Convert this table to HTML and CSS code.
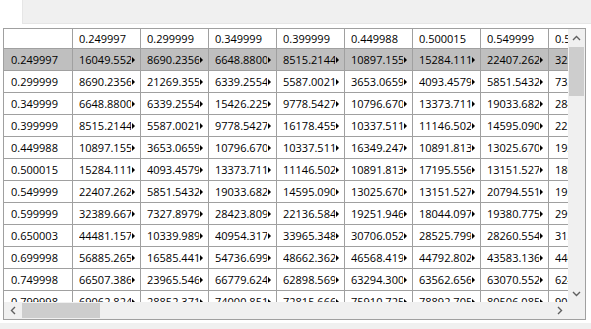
FILE: index.html
```html
<!DOCTYPE html>
<html>
<head>
<meta charset="utf-8">
<link rel="stylesheet" href="styles.css">
</head>
<body>
<div class="toolbar"></div>
<div class="frame">
  <div class="viewport">
    <div class="grid">
      <div class="row head"><div class="c rh"></div><div class="c">0.249997</div><div class="c">0.299999</div><div class="c">0.349999</div><div class="c">0.399999</div><div class="c">0.449988</div><div class="c">0.500015</div><div class="c">0.549999</div><div class="c">0.599999</div></div>
      <div class="row sel"><div class="c rh">0.249997</div><div class="c e"><span>16049.5523</span></div><div class="c e"><span>8690.23561</span></div><div class="c e"><span>6648.88003</span></div><div class="c e"><span>8515.21442</span></div><div class="c e"><span>10897.1552</span></div><div class="c e"><span>15284.1117</span></div><div class="c e"><span>22407.2621</span></div><div class="c e"><span>32389.6671</span></div></div>
      <div class="row"><div class="c rh">0.299999</div><div class="c e"><span>8690.23561</span></div><div class="c e"><span>21269.3552</span></div><div class="c e"><span>6339.25541</span></div><div class="c e"><span>5587.00214</span></div><div class="c e"><span>3653.06591</span></div><div class="c e"><span>4093.45791</span></div><div class="c e"><span>5851.54321</span></div><div class="c e"><span>7327.89791</span></div></div>
      <div class="row"><div class="c rh">0.349999</div><div class="c e"><span>6648.88003</span></div><div class="c e"><span>6339.25541</span></div><div class="c e"><span>15426.2251</span></div><div class="c e"><span>9778.54271</span></div><div class="c e"><span>10796.6701</span></div><div class="c e"><span>13373.7113</span></div><div class="c e"><span>19033.6821</span></div><div class="c e"><span>28423.8091</span></div></div>
      <div class="row"><div class="c rh">0.399999</div><div class="c e"><span>8515.21442</span></div><div class="c e"><span>5587.00214</span></div><div class="c e"><span>9778.54271</span></div><div class="c e"><span>16178.4551</span></div><div class="c e"><span>10337.5112</span></div><div class="c e"><span>11146.5021</span></div><div class="c e"><span>14595.0901</span></div><div class="c e"><span>22136.5841</span></div></div>
      <div class="row"><div class="c rh">0.449988</div><div class="c e"><span>10897.1552</span></div><div class="c e"><span>3653.06591</span></div><div class="c e"><span>10796.6701</span></div><div class="c e"><span>10337.5112</span></div><div class="c e"><span>16349.2471</span></div><div class="c e"><span>10891.8131</span></div><div class="c e"><span>13025.6701</span></div><div class="c e"><span>19251.9461</span></div></div>
      <div class="row"><div class="c rh">0.500015</div><div class="c e"><span>15284.1117</span></div><div class="c e"><span>4093.45791</span></div><div class="c e"><span>13373.7113</span></div><div class="c e"><span>11146.5021</span></div><div class="c e"><span>10891.8131</span></div><div class="c e"><span>17195.5561</span></div><div class="c e"><span>13151.5271</span></div><div class="c e"><span>18044.0971</span></div></div>
      <div class="row"><div class="c rh">0.549999</div><div class="c e"><span>22407.2621</span></div><div class="c e"><span>5851.54321</span></div><div class="c e"><span>19033.6821</span></div><div class="c e"><span>14595.0901</span></div><div class="c e"><span>13025.6701</span></div><div class="c e"><span>13151.5271</span></div><div class="c e"><span>20794.5511</span></div><div class="c e"><span>19380.7751</span></div></div>
      <div class="row"><div class="c rh">0.599999</div><div class="c e"><span>32389.6671</span></div><div class="c e"><span>7327.89791</span></div><div class="c e"><span>28423.8091</span></div><div class="c e"><span>22136.5841</span></div><div class="c e"><span>19251.9461</span></div><div class="c e"><span>18044.0971</span></div><div class="c e"><span>19380.7751</span></div><div class="c e"><span>29513.2201</span></div></div>
      <div class="row"><div class="c rh">0.650003</div><div class="c e"><span>44481.1571</span></div><div class="c e"><span>10339.9891</span></div><div class="c e"><span>40954.3171</span></div><div class="c e"><span>33965.3481</span></div><div class="c e"><span>30706.0521</span></div><div class="c e"><span>28525.7991</span></div><div class="c e"><span>28260.5541</span></div><div class="c e"><span>31377.4021</span></div></div>
      <div class="row"><div class="c rh">0.699998</div><div class="c e"><span>56885.2651</span></div><div class="c e"><span>16585.4411</span></div><div class="c e"><span>54736.6991</span></div><div class="c e"><span>48662.3621</span></div><div class="c e"><span>46568.4191</span></div><div class="c e"><span>44792.8021</span></div><div class="c e"><span>43583.1361</span></div><div class="c e"><span>44021.6621</span></div></div>
      <div class="row"><div class="c rh">0.749998</div><div class="c e"><span>66507.3861</span></div><div class="c e"><span>23965.5461</span></div><div class="c e"><span>66779.6241</span></div><div class="c e"><span>62898.5691</span></div><div class="c e"><span>63294.3001</span></div><div class="c e"><span>63562.6561</span></div><div class="c e"><span>63070.5521</span></div><div class="c e"><span>62405.1181</span></div></div>
      <div class="row"><div class="c rh">0.799998</div><div class="c e"><span>69062.8241</span></div><div class="c e"><span>28852.3711</span></div><div class="c e"><span>74000.8511</span></div><div class="c e"><span>72815.6661</span></div><div class="c e"><span>75910.7251</span></div><div class="c e"><span>78892.7051</span></div><div class="c e"><span>80506.0851</span></div><div class="c e"><span>90117.2041</span></div></div>
    </div>
  </div>
  <div class="vbar">
    <div class="btn"><svg width="9" height="6" viewBox="0 0 9 6"><path d="M1 5 L4.5 1.5 L8 5" fill="none" stroke="#606060" stroke-width="1.4"/></svg></div>
    <div class="track"><div class="vthumb"></div></div>
    <div class="btn"><svg width="9" height="6" viewBox="0 0 9 6"><path d="M1 1 L4.5 4.5 L8 1" fill="none" stroke="#606060" stroke-width="1.4"/></svg></div>
  </div>
  <div class="hbar">
    <div class="btn"><svg width="6" height="9" viewBox="0 0 6 9"><path d="M5 1 L1.5 4.5 L5 8" fill="none" stroke="#606060" stroke-width="1.4"/></svg></div>
    <div class="track"><div class="hthumb"></div></div>
    <div class="btn"><svg width="6" height="9" viewBox="0 0 6 9"><path d="M1 1 L4.5 4.5 L1 8" fill="none" stroke="#606060" stroke-width="1.4"/></svg></div>
  </div>
  <div class="corner"></div>
</div>
<div class="status"></div>
</body>
</html>
```

FILE: styles.css
```css
html, body {
  margin: 0;
  padding: 0;
  background: #ffffff;
  width: 591px;
  height: 329px;
  overflow: hidden;
  font-family: "Open Sans", "Noto Sans", sans-serif;
  font-size: 11px;
  color: #000;
}

.toolbar {
  margin-left: 22px;
  height: 23px;
  background: #f0f0f0;
  border-left: 1px solid #e6e6e6;
  border-bottom: 1px solid #e6e6e6;
}

.frame {
  margin: 4px 0 0 3px;
  width: 583px;
  height: 292px;
  box-sizing: border-box;
  border: 1px solid #a0a0a0;
  display: grid;
  grid-template-columns: 564px 17px;
  grid-template-rows: 273px 17px;
}

.viewport {
  overflow: hidden;
  background: #fff;
}

.grid {
  width: max-content;
}

.row {
  display: grid;
  grid-template-columns: 69px repeat(8, 68px);
  height: 22px;
}

.row.head {
  height: 20px;
}

.c {
  box-sizing: border-box;
  border-right: 1px solid #a0a0a0;
  border-bottom: 1px solid #a0a0a0;
  padding-left: 6px;
  display: flex;
  align-items: center;
  white-space: nowrap;
  overflow: hidden;
}

.rh {
  padding-left: 7px;
}

.sel .c {
  background: #bfbfbf;
}

.e span {
  display: block;
  width: 52px;
  overflow: hidden;
  white-space: nowrap;
}

.e::after {
  content: "";
  flex: none;
  width: 0;
  height: 0;
  margin-left: 1px;
  border-left: 3px solid #000;
  border-top: 3px solid transparent;
  border-bottom: 3px solid transparent;
}

.vbar {
  background: #f0f0f0;
  display: flex;
  flex-direction: column;
}

.hbar {
  background: #f0f0f0;
  display: flex;
}

.btn {
  flex: none;
  width: 17px;
  height: 17px;
  display: flex;
  align-items: center;
  justify-content: center;
}

.track {
  flex: 1;
  display: flex;
}

.vbar .track {
  flex-direction: column;
  padding: 1px 1px 0 1px;
}

.hbar .track {
  padding: 1px 0 1px 1px;
}

.vthumb {
  width: 15px;
  height: 49px;
  background: #cdcdcd;
}

.hthumb {
  width: 78px;
  height: 15px;
  background: #cdcdcd;
}

.corner {
  background: #f0f0f0;
}

.status {
  margin-top: 3px;
  height: 6px;
  background: #f0f0f0;
}
```
